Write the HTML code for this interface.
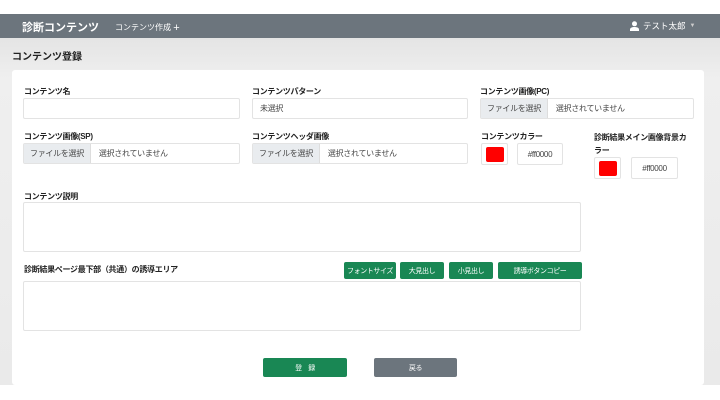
<!DOCTYPE html>
<html><head><meta charset="utf-8"><style>
*{box-sizing:border-box;margin:0;padding:0}
body{width:720px;height:400px;background:#fff;font-family:"Liberation Sans","Noto Sans CJK JP",sans-serif;position:relative;overflow:hidden;color:#222}
.a{position:absolute}
.nav{left:0;top:14px;width:720px;height:24px;background:#6c757d;color:#fff}
.bg{left:0;top:38px;width:720px;height:347px;background:linear-gradient(#e4e4e4,#efefef 40px,#eaeaea)}
.card{left:12px;top:70px;width:692px;height:315px;background:#fff;border-radius:3px}
.lb{font-size:8px;font-weight:bold;color:#222;letter-spacing:-0.3px}
.in{background:#fff;border:1px solid #e3e3e3;border-radius:2px;font-size:8px;color:#444;display:flex;align-items:center;white-space:nowrap;letter-spacing:-0.3px}
.fb{background:#e9ecef;height:100%;padding:0 6px;display:flex;align-items:center;border-right:1px solid #ddd;margin-right:8px}
.btn{background:#198754;color:#fff;font-size:7px;display:flex;align-items:center;justify-content:center;border-radius:2px;height:17px;top:262px;white-space:nowrap;letter-spacing:-0.4px}
.sw{width:18px;height:15px;background:#f00;border-radius:2px}
</style></head><body>
<div class="a nav">
<div class="a" style="left:22px;top:5px;font-size:11px;font-weight:bold">診断コンテンツ</div>
<div class="a" style="left:115px;top:7px;font-size:8px">コンテンツ作成 <span style="font-size:11px;position:relative;top:1px">+</span></div>
<div class="a" style="left:630px;top:6px;font-size:8.5px;display:flex;align-items:center"><svg width="9" height="10" viewBox="0 0 9 10" style="margin-right:4px"><circle cx="4.5" cy="2.8" r="2.5" fill="#fff"/><path d="M0 10V8.5C0 6.8 2 6 4.5 6S9 6.8 9 8.5V10Z" fill="#fff"/></svg>テスト太郎 <span style="font-size:6px;color:#ccc;margin-left:4px">▼</span></div>
</div>
<div class="a bg"></div>
<div class="a" style="left:12px;top:48px;font-size:10px;font-weight:bold">コンテンツ登録</div>
<div class="a card"></div>

<div class="a lb" style="left:24px;top:86px">コンテンツ名</div>
<div class="a in" style="left:23px;top:98px;width:217px;height:21px"></div>
<div class="a lb" style="left:252px;top:86px">コンテンツパターン</div>
<div class="a in" style="left:252px;top:98px;width:216px;height:21px;padding-left:7px">未選択</div>
<div class="a lb" style="left:480px;top:86px">コンテンツ画像(PC)</div>
<div class="a in" style="left:480px;top:98px;width:214px;height:21px"><span class="fb">ファイルを選択</span>選択されていません</div>

<div class="a lb" style="left:24px;top:131px">コンテンツ画像(SP)</div>
<div class="a in" style="left:23px;top:143px;width:217px;height:21px"><span class="fb">ファイルを選択</span>選択されていません</div>
<div class="a lb" style="left:252px;top:131px">コンテンツヘッダ画像</div>
<div class="a in" style="left:252px;top:143px;width:216px;height:21px"><span class="fb">ファイルを選択</span>選択されていません</div>
<div class="a lb" style="left:481px;top:131px">コンテンツカラー</div>
<div class="a in" style="left:481px;top:143px;width:27px;height:22px;justify-content:center"><div class="sw"></div></div>
<div class="a in" style="left:517px;top:143px;width:46px;height:22px;justify-content:center">#ff0000</div>
<div class="a lb" style="left:594px;top:131px;width:96px;line-height:13px">診断結果メイン画像背景カラー</div>
<div class="a in" style="left:594px;top:157px;width:27px;height:22px;justify-content:center"><div class="sw"></div></div>
<div class="a in" style="left:631px;top:157px;width:47px;height:22px;justify-content:center">#ff0000</div>

<div class="a lb" style="left:24px;top:191px">コンテンツ説明</div>
<div class="a in" style="left:23px;top:202px;width:558px;height:50px"></div>
<div class="a lb" style="left:24px;top:264px">診断結果ページ最下部（共通）の誘導エリア</div>
<div class="a btn" style="left:344px;width:52px">フォントサイズ</div>
<div class="a btn" style="left:400px;width:44px">大見出し</div>
<div class="a btn" style="left:449px;width:44px">小見出し</div>
<div class="a btn" style="left:498px;width:84px">誘導ボタンコピー</div>
<div class="a in" style="left:23px;top:281px;width:558px;height:50px"></div>

<div class="a btn" style="left:263px;top:358px;width:84px;height:19px">登　録</div>
<div class="a btn" style="left:374px;top:358px;width:83px;height:19px;background:#6c757d">戻る</div>
</body></html>
